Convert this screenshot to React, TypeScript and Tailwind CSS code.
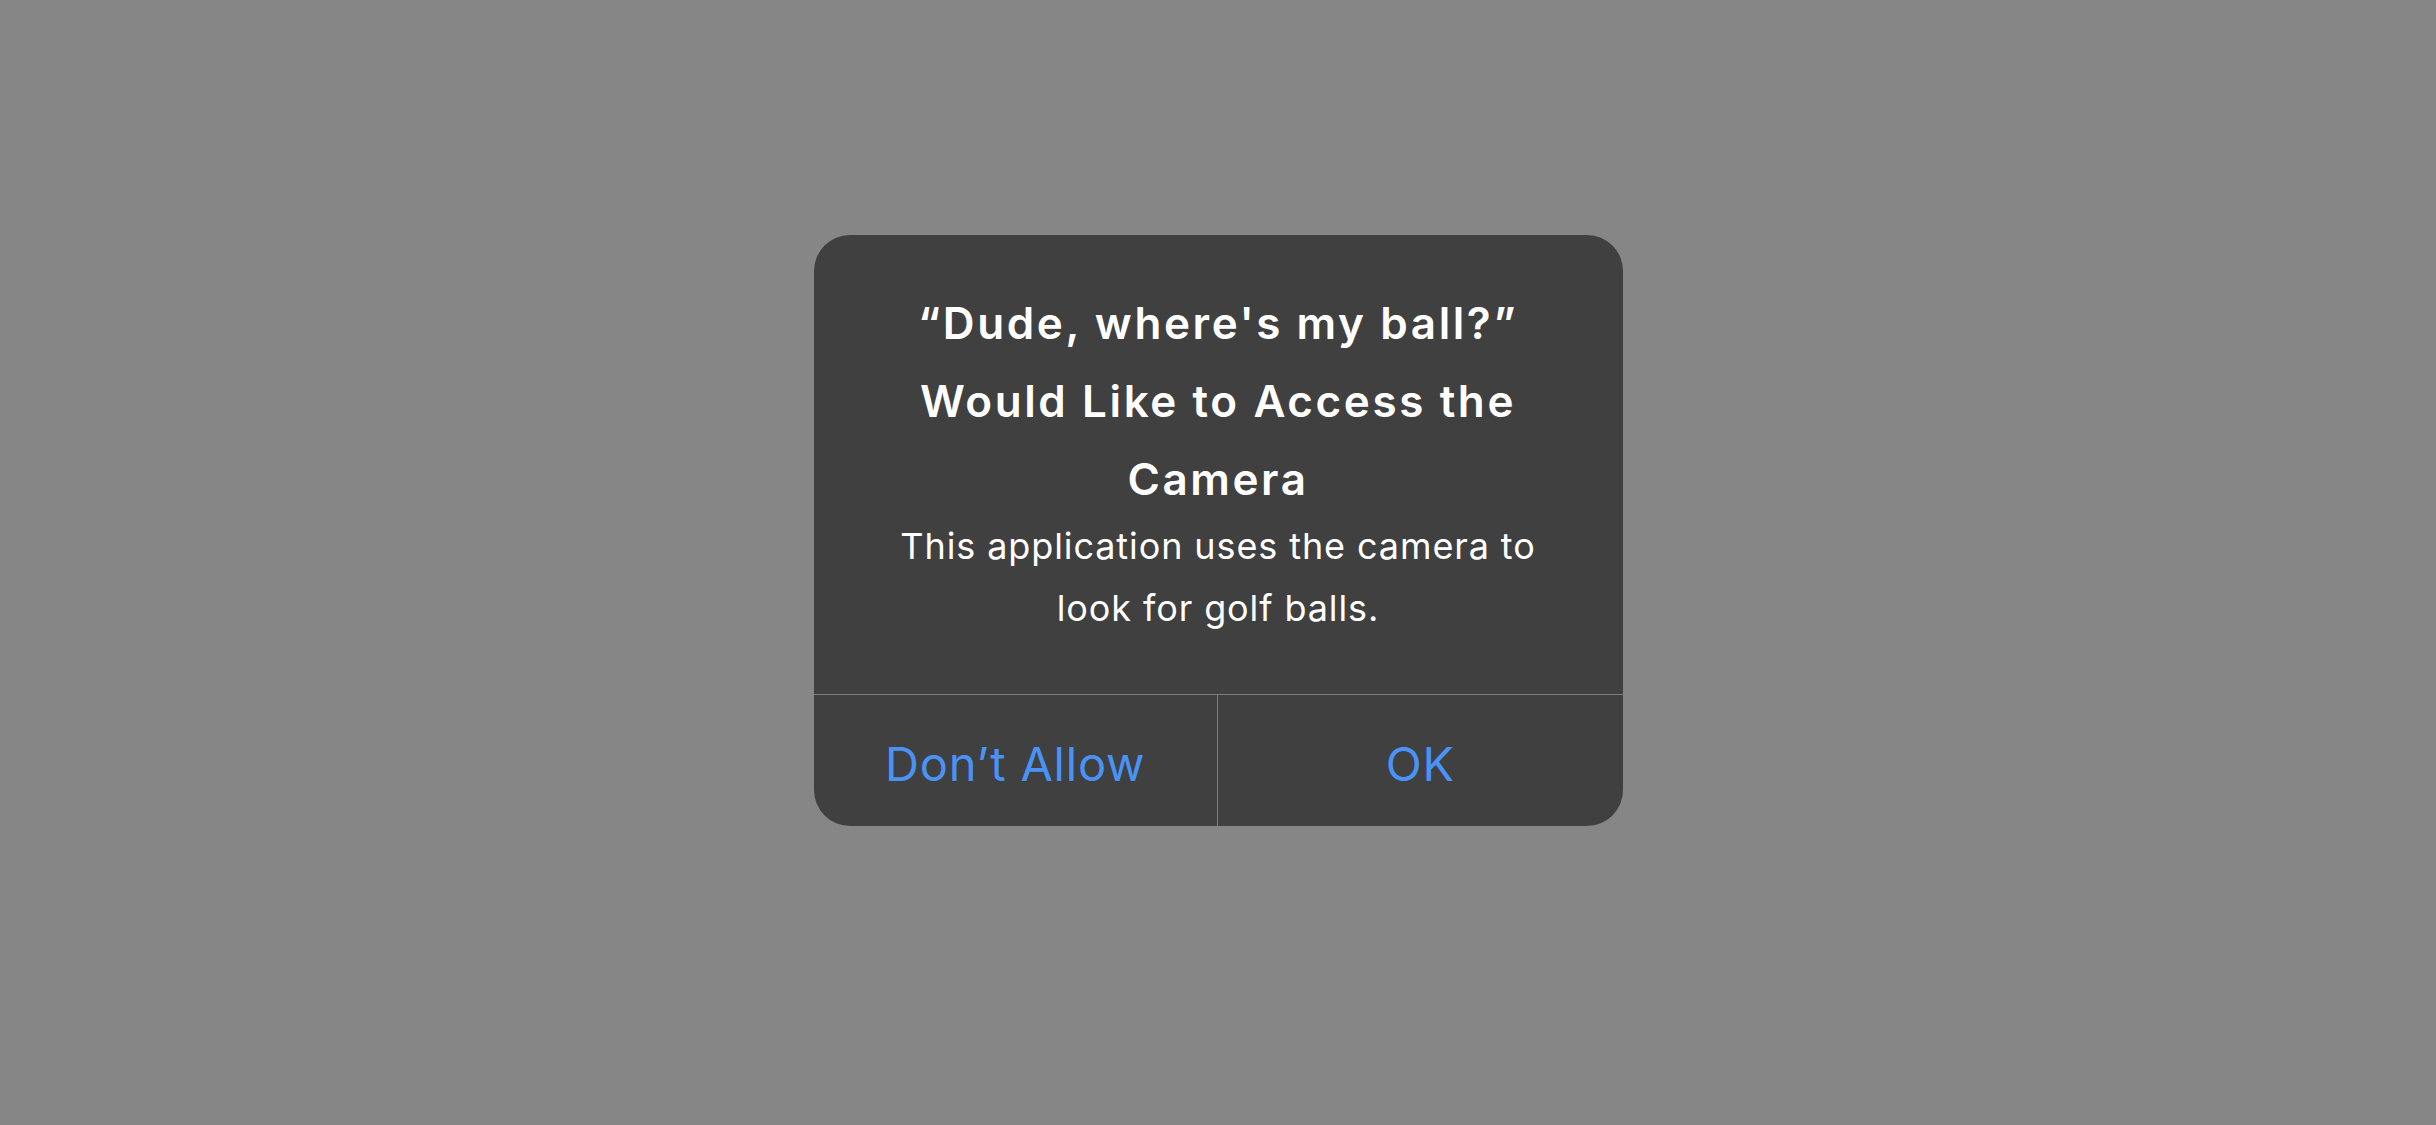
export default function App() {
  return (
    <div className="flex min-h-screen w-full justify-center bg-[#868686] pt-[235px] font-['Inter','Noto_Sans',sans-serif]">
      <section
        role="alertdialog"
        aria-labelledby="camera-alert-title"
        className="flex h-[591px] w-[809px] flex-col overflow-hidden rounded-[36px] bg-[#404040] text-white"
      >
        <div className="flex flex-1 flex-col items-center px-8 pt-[49px] text-center">
          <h2
            id="camera-alert-title"
            className="text-[44px] font-semibold leading-[78px] tracking-[2.6px]"
          >
            “Dude, where's my ball?”
            <br />
            Would Like to Access the
            <br />
            Camera
          </h2>
          <p className="-mt-[3px] text-[36px] leading-[62px] tracking-[0.9px]">
            This application uses the camera to
            <br />
            look for golf balls.
          </p>
        </div>

        <div className="grid h-[132px] grid-cols-2 border-t border-[#7c7c7c]">
          <button
            type="button"
            className="flex items-center justify-center border-r border-[#7c7c7c] pt-2 text-[47px] tracking-[0.8px] text-[#4993f7]"
          >
            Don’t Allow
          </button>
          <button
            type="button"
            className="flex items-center justify-center pt-2 text-[47px] tracking-[0.8px] text-[#4993f7]"
          >
            OK
          </button>
        </div>
      </section>
    </div>
  );
}
